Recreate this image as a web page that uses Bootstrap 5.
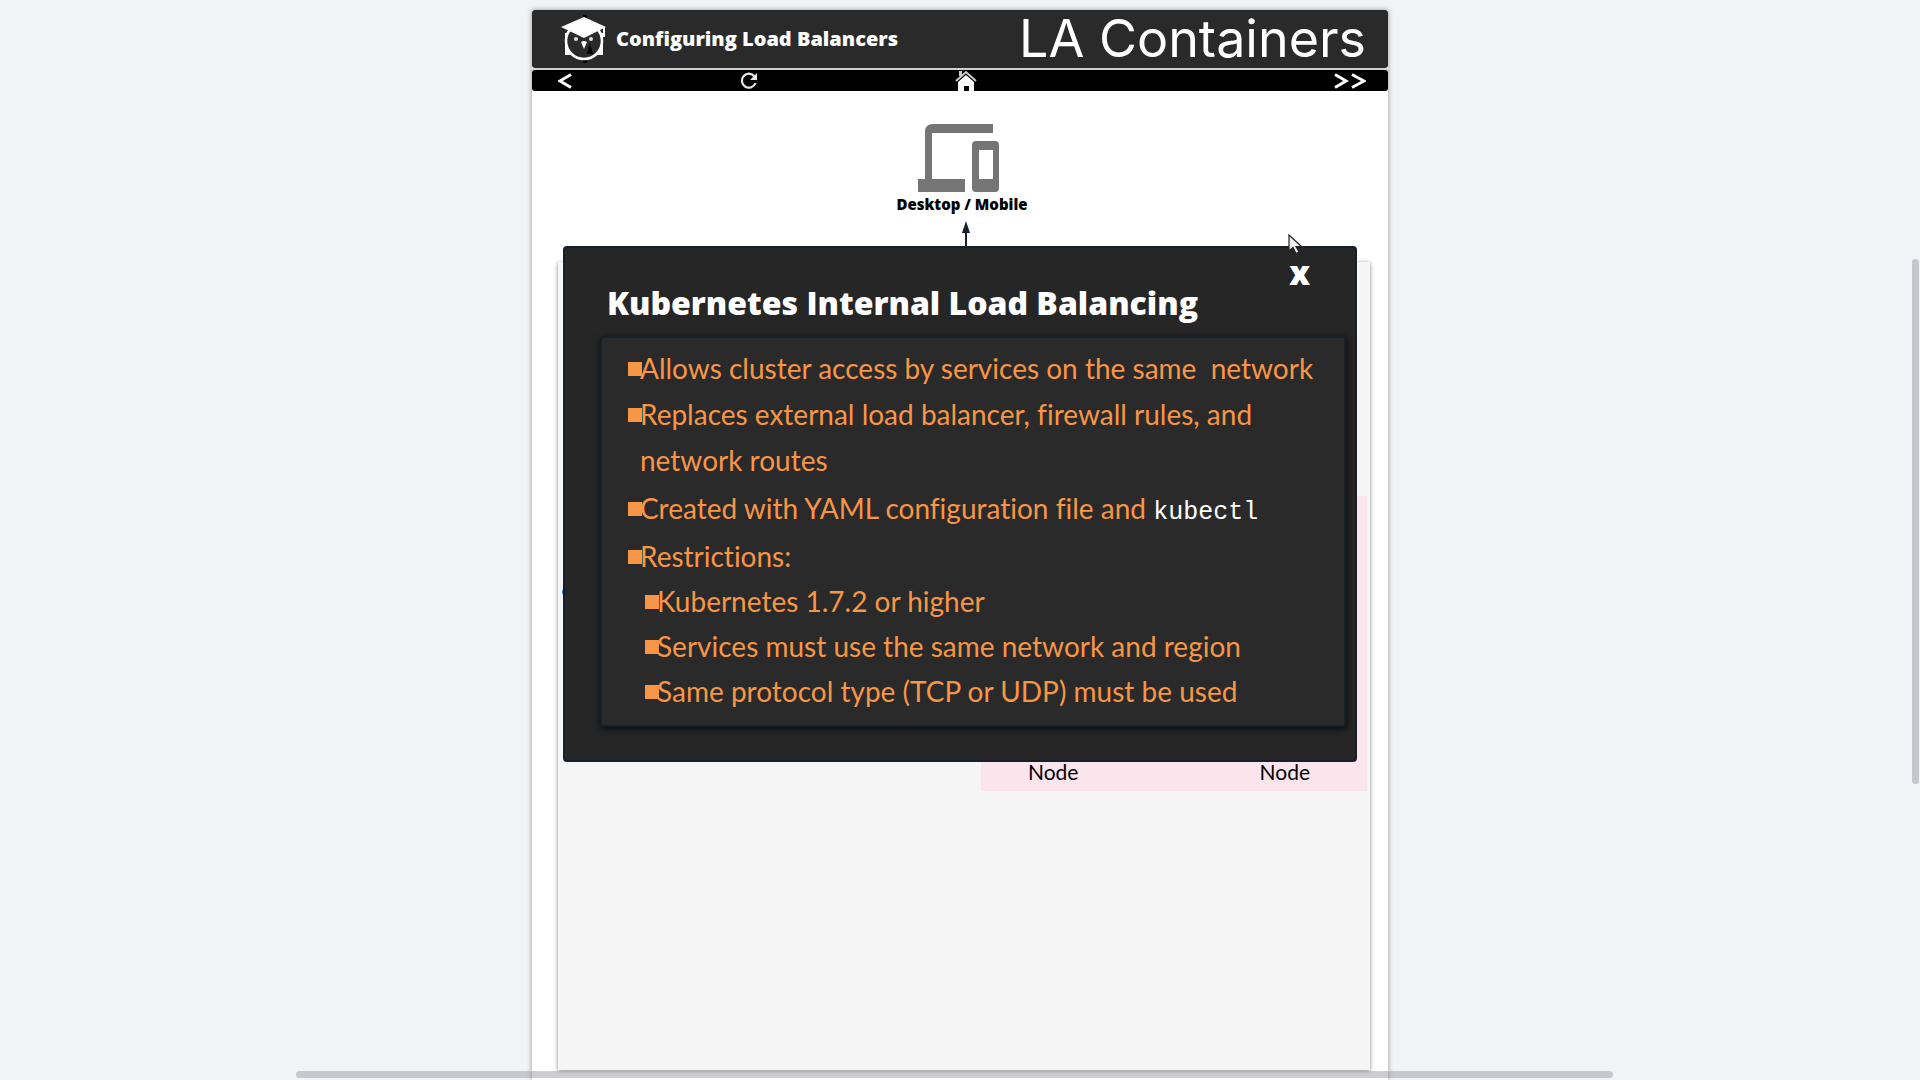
<!DOCTYPE html>
<html lang="en">
<head>
<meta charset="utf-8">
<meta name="viewport" content="width=device-width, initial-scale=1">
<title>LA Containers</title>
<link href="https://cdn.jsdelivr.net/npm/bootstrap@5.3.0/dist/css/bootstrap.min.css" rel="stylesheet">
<style>
  body { background: #f1f3f4; font-family: Lato, "Open Sans", sans-serif; font-variant-ligatures: none; color: #000; overflow: hidden; height: 100vh; }
  .stage { padding-top: 10px; }
  .sheet { max-width: 856px; min-height: calc(100vh - 10px); background: #fff; box-shadow: 0 0 5px rgba(0,0,0,.4); }
  .brandbar { background: #2a2a2a; height: 58px; border-radius: 3px; padding: 0 22px 0 28px; }
  .owl { width: 48px; height: 48px; }
  .lesson, .device-name, .dialog h1, .dismiss { font-family: "Open Sans", Lato, sans-serif; font-weight: 800; }
  .lesson { font-size: 20px; }
  .course { font-family: Inter, "Open Sans", sans-serif; font-size: 52px; line-height: 56px; }
  .steps { display: grid; grid-template-columns: 182fr 215fr 378fr 32fr; height: 21px; margin-top: 2px; padding: 0 22px 0 26px; background: #000; border-radius: 3px; box-shadow: 0 -2px 0 #d0d0d0; }
  .steps a { display: flex; align-items: center; color: #fff; }
  .device { padding-top: 33px; }
  .device-name { font-size: 15px; line-height: 20px; margin-top: 2px; padding-left: 4px; }
  .uplink { margin-top: 7px; padding-left: 12px; line-height: 0; }
  .zone { background: #f5f5f5; height: 808px; margin: 4px 18px 0 26px; padding: 234px 3px 0 0; box-shadow: 0 1px 4px rgba(0,0,0,.5); }
  .cluster { background: #fce4ec; width: 386px; height: 295px; padding: 0 57px 7px 47px; }
  .node { font-size: 21px; line-height: 24px; }
  .endpoint { width: 8px; height: 8px; border-radius: 50%; background: #2f7de1; top: 578px; left: 30px; }
  .dialog { top: 236px; left: 31px; right: 31px; background: #262626; border: 2px solid #16202c; border-radius: 4px; padding: 31px 9px 33px 35px; }
  .dialog h1 { font-size: 32px; line-height: 48px; color: #fff; margin: 0 0 9px 7px; }
  .dismiss { top: 7px; right: 45px; font-size: 33px; line-height: 36px; color: #fff; background: none; border: 0; padding: 0; }
  .points { background: #2a2a2a; border: 2px solid #16202c; border-radius: 4px; box-shadow: 1px 2px 6px 1px rgba(0,0,0,.6); padding: 7px 0 11px 38px; color: #f79646; font-size: 28px; line-height: 46px; }
  .points ul { list-style: none; margin: 0; padding: 0; }
  .points ul ul { padding-left: 17px; line-height: 45px; }
  .points .spaced { margin-top: 2px; }
  .points li::before { content: ""; display: inline-block; width: 14px; height: 14px; margin: 0 -2px 0 -12px; vertical-align: 3px; background: #f79646; }
  .cmd { font-family: "Liberation Mono", monospace; font-size: 25px; line-height: 30px; color: #fff; }
  .pointer { top: 224px; left: 756px; }
  .track-x, .track-y { position: fixed; background: rgba(155,155,170,.5); border-radius: 4px; }
  .track-x { left: 15.4%; right: 16%; bottom: 2px; height: 7px; }
  .track-y { right: 1px; top: 24%; height: 525px; width: 7px; }
</style>
</head>
<body>
<div class="stage">
<main class="sheet container-fluid p-0 position-relative mt-0">
  <header class="brandbar d-flex align-items-center">
    <svg class="owl" viewBox="0 0 48 48" aria-hidden="true">
      <path d="M25 0v8M25 40v8" stroke="#000" stroke-width="4"/>
      <path d="M5 18h38v22H34V30H14v10H5z" fill="#fff"/>
      <circle cx="24" cy="26" r="18" fill="#2a2a2a" stroke="#fff" stroke-width="2.6"/>
      <path d="M1 12 24 2l22 10-22 11z" fill="#fff"/>
      <path d="M44 12v10" stroke="#fff" stroke-width="2"/>
      <circle cx="16" cy="24" r="2" fill="#ddd"/><circle cx="31" cy="24" r="2" fill="#ddd"/>
      <path d="M21 27q3-2 6 0l-3 7z" fill="#fff"/>
      <path d="m30 28 3 11h-6z" fill="#000"/>
    </svg>
    <span class="lesson text-white ms-2">Configuring Load Balancers</span>
    <span class="course text-white ms-auto">LA Containers</span>
  </header>
  <nav class="steps" aria-label="Lesson">
    <a href="#" aria-label="Previous"><svg width="14" height="16" viewBox="0 0 14 16" fill="none" stroke="#fff" stroke-width="3"><path d="M13 1.500 2 8l11 6.500"/></svg></a>
    <a href="#" aria-label="Reload"><svg width="18" height="18" viewBox="0 0 18 18"><path d="M14.500 4.500A7 7 0 1 0 15.500 11" fill="none" stroke="#e8e8e8" stroke-width="2.200"/><path d="M17 1v7h-7z" fill="#e8e8e8"/></svg></a>
    <a href="#" aria-label="Home"><svg width="22" height="21" viewBox="0 0 22 21"><path d="M4 1h3v5H4z" fill="#ccc"/><path d="M1 11 11 2l10 9" fill="none" stroke="#ccc" stroke-width="2"/><path d="m11 5 8 7v9h-5v-5H9v5H3v-9z" fill="#fff"/></svg></a>
    <a href="#" aria-label="Last"><svg width="32" height="16" viewBox="0 0 32 16" fill="none" stroke="#fff" stroke-width="3"><path d="M1 1.500 12 8 1 14.500M18 1.500 30 8l-12 6.500"/></svg></a>
  </nav>

  <section class="device d-flex flex-column align-items-center">
    <svg class="me-1" width="81" height="68" viewBox="0 0 81 68" fill="#757575" aria-hidden="true">
      <path d="M7 55V8q0-8 8-8h60v9H14v46h33v13H0V55z"/>
      <path fill-rule="evenodd" d="M58 17h19q4 0 4 4v43q0 4-4 4H58q-4 0-4-4V21q0-4 4-4zm3 9v29h14V26z"/>
    </svg>
    <div class="device-name">Desktop / Mobile</div>
    <div class="uplink"><svg width="8" height="37" viewBox="0 0 8 37"><path d="m4 0 4 12H5v25H3V12H0z" fill="#16202c"/></svg></div>
  </section>

  <section class="zone d-flex justify-content-end align-items-start">
    <div class="cluster d-flex justify-content-between align-items-end">
      <span class="node">Node</span><span class="node">Node</span>
    </div>
  </section>

  <span class="endpoint position-absolute"></span>

  <section class="dialog position-absolute" role="dialog" aria-labelledby="dialogTitle">
    <button type="button" class="dismiss position-absolute">x</button>
    <h1 id="dialogTitle">Kubernetes Internal Load Balancing</h1>
    <div class="points">
      <ul>
        <li>Allows cluster access by services on the same&nbsp; network</li>
        <li>Replaces external load balancer, firewall rules, and<br>network routes</li>
        <li class="spaced">Created with YAML configuration file and <span class="cmd">kubectl</span></li>
        <li class="spaced">Restrictions:
          <ul>
            <li>Kubernetes 1.7.2 or higher</li>
            <li>Services must use the same network and region</li>
            <li>Same protocol type (TCP or UDP) must be used</li>
          </ul>
        </li>
      </ul>
    </div>
  </section>

  <svg class="pointer position-absolute" width="15" height="21" viewBox="0 0 15 21"><path d="M1 1v16l4-3.500 3 6 3-1.500-3-5.500h5.500z" fill="#eee" stroke="#222" stroke-width="1.200"/></svg>
</main>
</div>
<div class="track-x"></div>
<div class="track-y"></div>
<script src="https://cdn.jsdelivr.net/npm/bootstrap@5.3.0/dist/js/bootstrap.bundle.min.js"></script>
</body>
</html>
